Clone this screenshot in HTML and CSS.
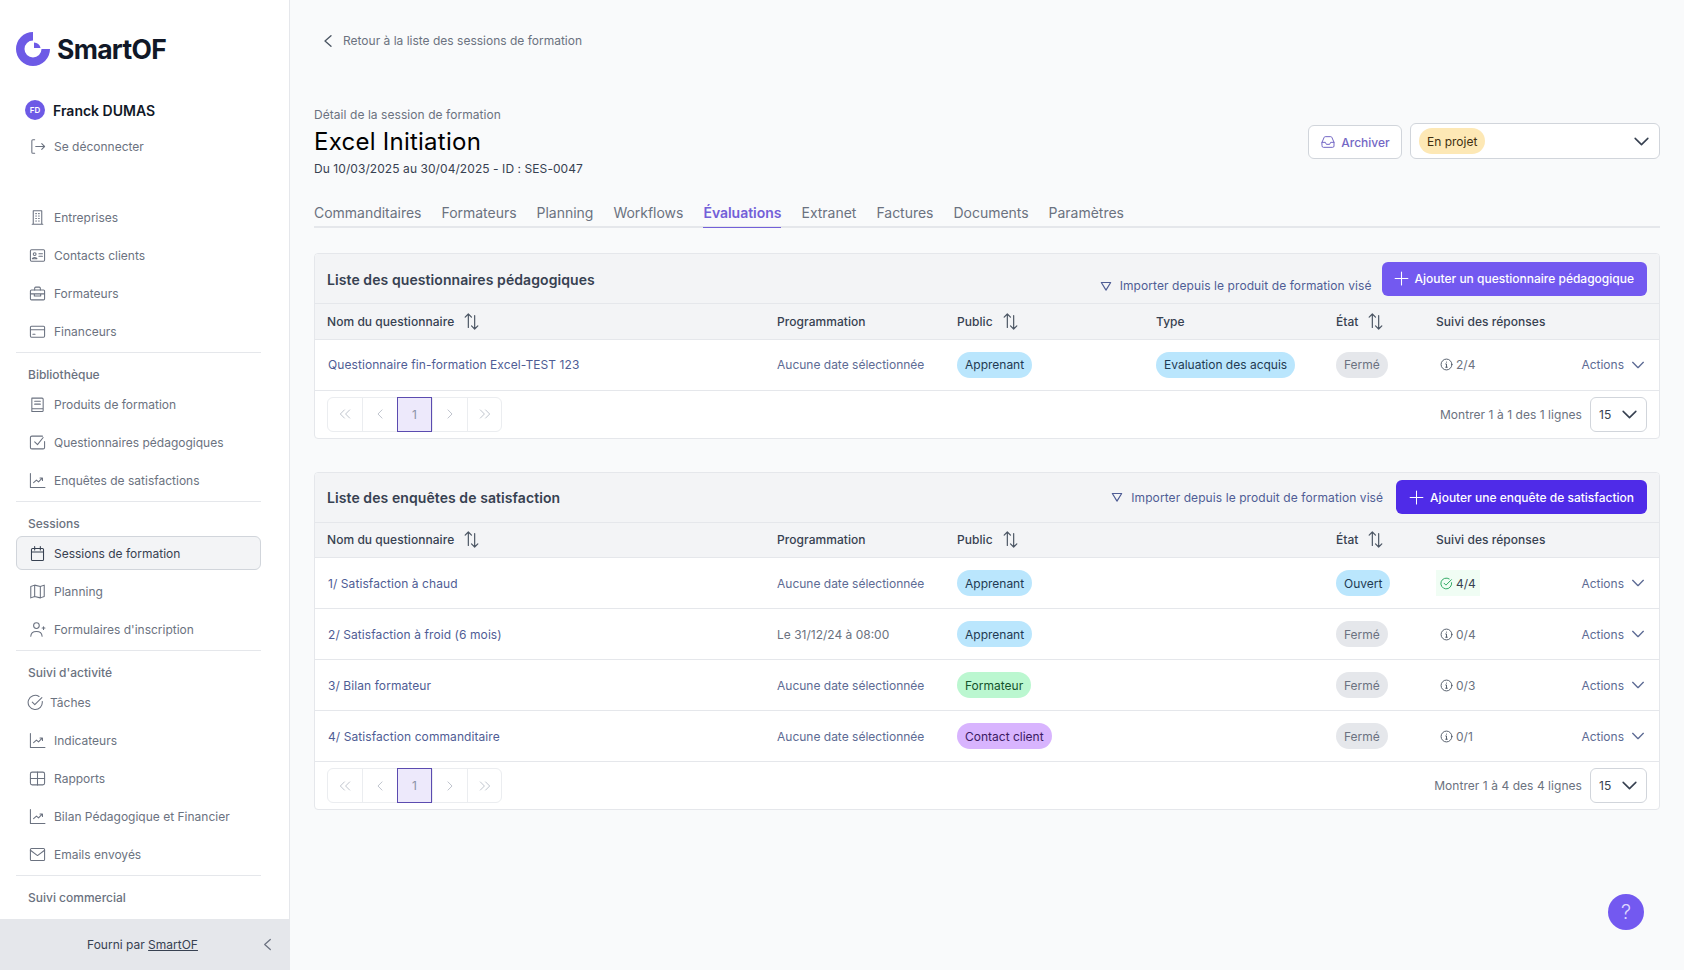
FILE: index.html
```html
<!DOCTYPE html>
<html lang="fr">
<head>
<meta charset="utf-8">
<title>Excel Initiation</title>
<link rel="stylesheet" href="styles.css">
</head>
<body>
<svg class="sprite" width="0" height="0">
  <defs>
    <symbol id="i-logout" viewBox="0 0 24 24"><path d="M8 2.500H5.500A1.500 1.500 0 0 0 4 4v16a1.500 1.500 0 0 0 1.500 1.500H8M9.500 12H22M18 8l4 4-4 4"/></symbol>
    <symbol id="i-building" viewBox="0 0 24 24"><path d="M6 21.500V2.500h12v19M4.500 21.500h15M9.500 6.500h1M13.500 6.500h1M9.500 10h1M13.500 10h1M9.500 13.500h1M13.500 13.500h1M9.500 17h1M13.500 17h1"/></symbol>
    <symbol id="i-id" viewBox="0 0 24 24"><rect x="2" y="4" width="20" height="16" rx="1.500"/><circle cx="8" cy="10" r="2"/><path d="M4.800 16.500c.6-2.400 5.800-2.400 6.400 0zM14 9.500h5M14 13h5"/></symbol>
    <symbol id="i-briefcase" viewBox="0 0 24 24"><rect x="2" y="7" width="20" height="14" rx="1.500"/><path d="M8 7V4.500A1.500 1.500 0 0 1 9.500 3h5A1.500 1.500 0 0 1 16 4.500V7M2 12.500h20M7.500 12.500v3h9v-3"/></symbol>
    <symbol id="i-card" viewBox="0 0 24 24"><rect x="2" y="4.500" width="20" height="15.500" rx="1.500"/><path d="M2 9.500h20M5.500 16h3"/></symbol>
    <symbol id="i-book" viewBox="0 0 24 24"><path d="M4 3h14.500A1.500 1.500 0 0 1 20 4.500v16a1.500 1.500 0 0 1-1.500 1.500H4zM8 7.500h8M8 11.500h8M4 18h16"/></symbol>
    <symbol id="i-check" viewBox="0 0 24 24"><path d="M22 10.500V19a2 2 0 0 1-2 2H4a2 2 0 0 1-2-2V5a2 2 0 0 1 2-2h15M8 11l4 4 8-10"/></symbol>
    <symbol id="i-chart" viewBox="0 0 24 24"><path d="M2 2v20h20.500M6.500 15l4-3.500 3 2.500 5-5.500M15.500 8.500h3.500V12"/></symbol>
    <symbol id="i-cal" viewBox="0 0 24 24"><rect x="3.500" y="5" width="17" height="17" rx="1.500"/><path d="M8 2v5M16 2v5M3.500 10h17"/></symbol>
    <symbol id="i-map" viewBox="0 0 24 24"><path d="M8 3 2.500 5v16L8 19l8 2 5.500-2V3L16 5zM8 3v16M16 5v16"/></symbol>
    <symbol id="i-user" viewBox="0 0 24 24"><circle cx="10.500" cy="6.500" r="4"/><path d="M2.500 21.500c.5-9 15.500-9 16 0M20.500 8v4M18.500 10h4"/></symbol>
    <symbol id="i-ok" viewBox="0 0 24 24"><path d="M21.500 10.500A10 10 0 1 1 17 3.500M7.500 11.500l3.500 3.500L21 5"/></symbol>
    <symbol id="i-grid" viewBox="0 0 24 24"><rect x="2" y="3" width="20" height="18" rx="2.500"/><path d="M2 12h20M12 3v18"/></symbol>
    <symbol id="i-mail" viewBox="0 0 24 24"><rect x="2" y="3.500" width="20" height="17" rx="1.500"/><path d="M2 6l10 7.500L22 6"/></symbol>
    <symbol id="i-inbox" viewBox="0 0 24 24"><path d="M3 12.500 6 5.500A2 2 0 0 1 7.800 4h8.400A2 2 0 0 1 18 5.500l3 7V18a2 2 0 0 1-2 2H5a2 2 0 0 1-2-2zM3 12.500h5l1.500 3h5l1.500-3h5"/></symbol>
    <symbol id="i-sort" viewBox="0 0 24 24"><path d="M8 19.500V2.500M4 6.500l4-4 4 4M16 4.500v17M12 17.500l4 4 4-4"/></symbol>
    <symbol id="i-tri" viewBox="0 0 24 24"><path d="M4 6h16l-8 13z"/></symbol>
    <symbol id="i-plus" viewBox="0 0 24 24"><path d="M12 3v18M3 12h18"/></symbol>
    <symbol id="i-down" viewBox="0 0 24 24"><path d="M4 8l8 8 8-8"/></symbol>
    <symbol id="i-left" viewBox="0 0 24 24"><path d="M16.500 4l-9 8 9 8"/></symbol>
    <symbol id="i-info" viewBox="0 0 24 24"><circle cx="12" cy="12" r="10"/><path d="M10.500 11H12v6M10.500 17h3M12 7.500v.3"/></symbol>
    <symbol id="i-first" viewBox="0 0 24 24"><path d="M11 5l-7 7 7 7M20 5l-7 7 7 7"/></symbol>
    <symbol id="i-prev" viewBox="0 0 24 24"><path d="M15.500 5l-7 7 7 7"/></symbol>
    <symbol id="i-next" viewBox="0 0 24 24"><path d="M8.500 5l7 7-7 7"/></symbol>
    <symbol id="i-last" viewBox="0 0 24 24"><path d="M4 5l7 7-7 7M13 5l7 7-7 7"/></symbol>
  </defs>
</svg>

<div class="app">
  <aside class="sidebar">
    <div class="side-scroll">
      <div class="logo">
        <svg class="logo-mark" viewBox="0 0 34 34"><path class="logo-fill" d="M17 0V8.500A8.500 8.500 0 1 0 25.500 17H34A17 17 0 1 1 17 0Z"/><path class="logo-fill" d="M18 10.500A6.500 6.500 0 0 1 24.500 16H18Z"/></svg>
        <span class="logo-text">SmartOF</span>
      </div>
      <div class="user"><span class="avatar">FD</span><span class="user-name">Franck DUMAS</span></div>
      <a class="nav-item logout"><svg class="ico"><use href="#i-logout"/></svg>Se déconnecter</a>

      <nav class="nav-group first">
        <a class="nav-item"><svg class="ico"><use href="#i-building"/></svg>Entreprises</a>
        <a class="nav-item"><svg class="ico"><use href="#i-id"/></svg>Contacts clients</a>
        <a class="nav-item"><svg class="ico"><use href="#i-briefcase"/></svg>Formateurs</a>
        <a class="nav-item"><svg class="ico"><use href="#i-card"/></svg>Financeurs</a>
      </nav>
      <nav class="nav-group">
        <div class="nav-title">Bibliothèque</div>
        <a class="nav-item"><svg class="ico"><use href="#i-book"/></svg>Produits de formation</a>
        <a class="nav-item"><svg class="ico"><use href="#i-check"/></svg>Questionnaires pédagogiques</a>
        <a class="nav-item"><svg class="ico"><use href="#i-chart"/></svg>Enquêtes de satisfactions</a>
      </nav>
      <nav class="nav-group">
        <div class="nav-title">Sessions</div>
        <a class="nav-item active"><svg class="ico"><use href="#i-cal"/></svg>Sessions de formation</a>
        <a class="nav-item"><svg class="ico"><use href="#i-map"/></svg>Planning</a>
        <a class="nav-item"><svg class="ico"><use href="#i-user"/></svg>Formulaires d'inscription</a>
      </nav>
      <nav class="nav-group">
        <div class="nav-title">Suivi d'activité</div>
        <a class="nav-item tight"><svg class="ico"><use href="#i-ok"/></svg>Tâches</a>
        <a class="nav-item"><svg class="ico"><use href="#i-chart"/></svg>Indicateurs</a>
        <a class="nav-item"><svg class="ico"><use href="#i-grid"/></svg>Rapports</a>
        <a class="nav-item"><svg class="ico"><use href="#i-chart"/></svg>Bilan Pédagogique et Financier</a>
        <a class="nav-item"><svg class="ico"><use href="#i-mail"/></svg>Emails envoyés</a>
      </nav>
      <nav class="nav-group">
        <div class="nav-title">Suivi commercial</div>
      </nav>
    </div>
    <footer class="side-foot">
      <span class="foot-text">Fourni par <u>SmartOF</u></span>
      <svg class="foot-chev"><use href="#i-left"/></svg>
    </footer>
  </aside>

  <main class="main">
    <a class="back"><svg class="back-ico"><use href="#i-left"/></svg>Retour à la liste des sessions de formation</a>

    <header class="head">
      <div class="head-text">
        <div class="eyebrow">Détail de la session de formation</div>
        <h1 class="title">Excel Initiation</h1>
        <div class="subtitle">Du 10/03/2025 au 30/04/2025 - ID : SES-0047</div>
      </div>
      <div class="head-actions">
        <button class="btn-archive"><svg class="ico-s"><use href="#i-inbox"/></svg>Archiver</button>
        <div class="status-select"><span class="badge amber">En projet</span><svg class="chev-dark"><use href="#i-down"/></svg></div>
      </div>
    </header>

    <div class="tabs">
      <a class="tab">Commanditaires</a>
      <a class="tab">Formateurs</a>
      <a class="tab">Planning</a>
      <a class="tab">Workflows</a>
      <a class="tab on">Évaluations</a>
      <a class="tab">Extranet</a>
      <a class="tab">Factures</a>
      <a class="tab">Documents</a>
      <a class="tab">Paramètres</a>
    </div>

    <section class="card first-card">
      <div class="card-head">
        <h2 class="card-title">Liste des questionnaires pédagogiques</h2>
        <a class="import low"><svg class="tri"><use href="#i-tri"/></svg>Importer depuis le produit de formation visé</a>
        <button class="btn-add light"><svg class="plus"><use href="#i-plus"/></svg>Ajouter un questionnaire pédagogique</button>
      </div>
      <table class="tbl">
        <colgroup><col class="c1"><col class="c2"><col class="c3"><col class="c4"><col class="c5"><col class="c6"><col class="c7"></colgroup>
        <thead><tr>
          <th>Nom du questionnaire<svg class="sort"><use href="#i-sort"/></svg></th>
          <th>Programmation</th>
          <th>Public<svg class="sort"><use href="#i-sort"/></svg></th>
          <th>Type</th>
          <th>État<svg class="sort"><use href="#i-sort"/></svg></th>
          <th>Suivi des réponses</th>
          <th></th>
        </tr></thead>
        <tbody>
          <tr>
            <td class="link">Questionnaire fin-formation Excel-TEST 123</td>
            <td class="link2">Aucune date sélectionnée</td>
            <td><span class="badge blue">Apprenant</span></td>
            <td><span class="badge blue">Evaluation des acquis</span></td>
            <td><span class="badge gray">Fermé</span></td>
            <td><span class="resp"><svg class="ico-r"><use href="#i-info"/></svg>2/4</span></td>
            <td class="act"><span class="act-in">Actions<svg class="chev"><use href="#i-down"/></svg></span></td>
          </tr>
        </tbody>
      </table>
      <div class="pager-row">
        <div class="pager">
          <span class="pg"><svg class="pg-ico"><use href="#i-first"/></svg></span>
          <span class="pg"><svg class="pg-ico"><use href="#i-prev"/></svg></span>
          <span class="pg cur">1</span>
          <span class="pg"><svg class="pg-ico"><use href="#i-next"/></svg></span>
          <span class="pg"><svg class="pg-ico"><use href="#i-last"/></svg></span>
        </div>
        <div class="count"><span>Montrer 1 à 1 des 1 lignes</span><span class="size">15<svg class="chev-dark"><use href="#i-down"/></svg></span></div>
      </div>
    </section>

    <section class="card">
      <div class="card-head">
        <h2 class="card-title">Liste des enquêtes de satisfaction</h2>
        <a class="import"><svg class="tri"><use href="#i-tri"/></svg>Importer depuis le produit de formation visé</a>
        <button class="btn-add"><svg class="plus"><use href="#i-plus"/></svg>Ajouter une enquête de satisfaction</button>
      </div>
      <table class="tbl">
        <colgroup><col class="c1"><col class="c2"><col class="c3"><col class="c4"><col class="c5"><col class="c6"><col class="c7"></colgroup>
        <thead><tr>
          <th>Nom du questionnaire<svg class="sort"><use href="#i-sort"/></svg></th>
          <th>Programmation</th>
          <th>Public<svg class="sort"><use href="#i-sort"/></svg></th>
          <th></th>
          <th>État<svg class="sort"><use href="#i-sort"/></svg></th>
          <th>Suivi des réponses</th>
          <th></th>
        </tr></thead>
        <tbody>
          <tr>
            <td class="link">1/ Satisfaction à chaud</td>
            <td class="link2">Aucune date sélectionnée</td>
            <td><span class="badge blue">Apprenant</span></td>
            <td></td>
            <td><span class="badge blue">Ouvert</span></td>
            <td><span class="resp done"><svg class="ico-r"><use href="#i-ok"/></svg>4/4</span></td>
            <td class="act"><span class="act-in">Actions<svg class="chev"><use href="#i-down"/></svg></span></td>
          </tr>
          <tr>
            <td class="link">2/ Satisfaction à froid (6 mois)</td>
            <td class="muted">Le 31/12/24 à 08:00</td>
            <td><span class="badge blue">Apprenant</span></td>
            <td></td>
            <td><span class="badge gray">Fermé</span></td>
            <td><span class="resp"><svg class="ico-r"><use href="#i-info"/></svg>0/4</span></td>
            <td class="act"><span class="act-in">Actions<svg class="chev"><use href="#i-down"/></svg></span></td>
          </tr>
          <tr>
            <td class="link">3/ Bilan formateur</td>
            <td class="link2">Aucune date sélectionnée</td>
            <td><span class="badge green">Formateur</span></td>
            <td></td>
            <td><span class="badge gray">Fermé</span></td>
            <td><span class="resp"><svg class="ico-r"><use href="#i-info"/></svg>0/3</span></td>
            <td class="act"><span class="act-in">Actions<svg class="chev"><use href="#i-down"/></svg></span></td>
          </tr>
          <tr>
            <td class="link">4/ Satisfaction commanditaire</td>
            <td class="link2">Aucune date sélectionnée</td>
            <td><span class="badge purple">Contact client</span></td>
            <td></td>
            <td><span class="badge gray">Fermé</span></td>
            <td><span class="resp"><svg class="ico-r"><use href="#i-info"/></svg>0/1</span></td>
            <td class="act"><span class="act-in">Actions<svg class="chev"><use href="#i-down"/></svg></span></td>
          </tr>
        </tbody>
      </table>
      <div class="pager-row">
        <div class="pager">
          <span class="pg"><svg class="pg-ico"><use href="#i-first"/></svg></span>
          <span class="pg"><svg class="pg-ico"><use href="#i-prev"/></svg></span>
          <span class="pg cur">1</span>
          <span class="pg"><svg class="pg-ico"><use href="#i-next"/></svg></span>
          <span class="pg"><svg class="pg-ico"><use href="#i-last"/></svg></span>
        </div>
        <div class="count"><span>Montrer 1 à 4 des 4 lignes</span><span class="size">15<svg class="chev-dark"><use href="#i-down"/></svg></span></div>
      </div>
    </section>

    <button class="help">?</button>
  </main>
</div>
</body>
</html>
```

FILE: styles.css
```css
* { box-sizing: border-box; }
html, body { margin: 0; height: 100%; overflow: hidden; }
body { font-family: Inter, "Noto Sans", sans-serif; font-size: 12px; color: #111827; background: #f9fafb; }
.sprite { display: block; height: 0; }
svg { fill: none; stroke: currentColor; stroke-linecap: round; stroke-linejoin: round; }
a { display: block; }

.app { display: flex; height: 970px; }

/* Sidebar */
.sidebar { width: 290px; flex: none; display: flex; flex-direction: column; background: #fff; border-right: 1px solid #e5e7eb; }
.side-scroll { flex: 1; min-height: 0; overflow: hidden; padding: 32px 28px 0 16px; }
.logo { display: flex; align-items: center; height: 34px; gap: 7px; }
.logo-mark { width: 34px; height: 34px; stroke: none; }
.logo-fill { fill: #6d5ae6; }
.logo-text { font-size: 26.500px; font-weight: 700; color: #111827; letter-spacing: -0.7px; line-height: 34px; }
.user { display: flex; align-items: center; gap: 8px; margin-top: 34px; padding-left: 9px; height: 20px; }
.avatar { width: 20px; height: 20px; border-radius: 50%; background: #6d5ae6; color: #fff; font-size: 8px; font-weight: 600; display: flex; align-items: center; justify-content: center; }
.user-name { font-size: 14px; font-weight: 600; color: #111827; }
.nav-item { display: flex; align-items: center; height: 38px; padding-left: 12px; gap: 8px; color: #6b7280; border: 1px solid transparent; border-radius: 6px; }
.ico { width: 17px; height: 17px; stroke-width: 1.500; flex: none; color: #6b7280; }
.logout { margin-top: 7px; }
.nav-group { border-bottom: 1px solid #e5e7eb; padding-bottom: 2px; }
.nav-group.first { margin-top: 33px; }
.nav-group:last-child { border-bottom: 0; }
.nav-title { font-weight: 500; color: #6b7280; padding: 14px 0 0 12px; line-height: 16px; height: 32px; }
.nav-item.active { height: 34px; margin: 2px 0; background: #f3f4f6; border-color: #d1d5db; color: #374151; }
.nav-item.active .ico { color: #374151; }
.nav-item.tight { padding-left: 10px; gap: 6px; }
.side-foot { height: 51px; flex: none; background: #e5e7eb; display: flex; align-items: center; position: relative; justify-content: center; color: #374151; padding-right: 4px; }
.foot-chev { width: 15px; height: 15px; stroke-width: 2; color: #6b7280; position: absolute; right: 14px; top: 18px; }

/* Main */
.main { flex: 1; min-width: 0; padding: 32px 24px 0 24px; position: relative; background: #f9fafb; }
.back { display: flex; align-items: center; color: #6b7280; height: 17px; gap: 7px; padding-left: 6px; }
.back-ico { width: 16px; height: 16px; stroke-width: 2; color: #4b5563; }
.head { display: flex; justify-content: space-between; align-items: center; margin-top: 57px; }
.eyebrow { color: #6b7280; line-height: 18px; letter-spacing: .06px; }
.title { font-size: 24px; font-weight: 400; color: #000; margin: 2px 0 0; line-height: 32px; letter-spacing: .25px; }
.subtitle { color: #374151; line-height: 20px; margin-top: 1px; letter-spacing: .07px; }
.head-actions { display: flex; gap: 8px; align-items: flex-end; margin-top: -3px; }
.btn-archive { height: 34px; width: 94px; display: flex; align-items: center; justify-content: center; gap: 5px; background: #fff; border: 1px solid #d1d5db; border-radius: 6px; color: #7367c5; font: 500 12px Inter, sans-serif; padding: 0; }
.ico-s { width: 16px; height: 16px; stroke-width: 1.500; }
.status-select { width: 250px; height: 36px; display: flex; justify-content: space-between; align-items: center; background: #fff; border: 1px solid #d1d5db; border-radius: 6px; padding: 0 8px 0 8px; }
.chev-dark { width: 19px; height: 19px; stroke-width: 2; color: #374151; flex: none; }

.badge { display: inline-flex; align-items: center; height: 26px; padding: 0 8px; border-radius: 13px; font-size: 12px; color: #374151; }
.amber { background: #fde8b5; color: #3f2f10; }
.blue { background: #bae6fd; color: #1f3a52; }
.gray { background: #e5e7eb; color: #6b7280; }
.green { background: #bbf7d0; color: #14532d; }
.purple { background: #d8b4fe; color: #3b1a63; }

.tabs { display: flex; gap: 20px; margin-top: 21px; border-bottom: 2px solid #e5e7eb; height: 28px; }
.tab { font-size: 14px; color: #6b7280; line-height: 26px; height: 28px; letter-spacing: -.02px; }
.tab.on { color: #7360d8; font-weight: 600; border-bottom: 1px solid #7360d8; }

/* Cards */
.card { background: #fff; border: 1px solid #e5e7eb; border-radius: 4px; margin-top: 33px; overflow: hidden; }
.card.first-card { margin-top: 25px; }
.card-head { display: flex; align-items: center; height: 50px; padding: 0 12px; background: #f3f4f6; border-bottom: 1px solid #e5e7eb; }
.card-title { font-size: 14px; font-weight: 600; color: #374151; margin: 1px auto 0 0; letter-spacing: .08px; }
.import { display: flex; align-items: center; color: #4f5d95; gap: 7px; margin-right: 13px; letter-spacing: .08px; }
.import.low { margin-top: 14px; margin-right: 10px; }
.tri { width: 14px; height: 14px; stroke-width: 2; color: #4f5d95; }
.btn-add { height: 34px; display: flex; align-items: center; gap: 5px; border: 0; border-radius: 6px; padding: 0 13px 0 12px; background: #4f2be8; color: #fff; font: 500 12px Inter, sans-serif; }
.btn-add.light { background: #7359f0; padding-left: 11px; }
.plus { width: 17px; height: 17px; stroke-width: 1.500; }

.tbl { width: 100%; border-collapse: collapse; table-layout: fixed; }
.c1 { width: 450px; }
.c2 { width: 180px; }
.c3 { width: 199px; }
.c4 { width: 180px; }
.c5 { width: 100px; }
.c6 { width: 130px; }
.tbl th { height: 35px; text-align: left; font-size: 12px; font-weight: 500; color: #374151; background: #f3f4f6; padding: 0 0 0 12px; border-bottom: 1px solid #e5e7eb; white-space: nowrap; letter-spacing: .05px; }
.sort { width: 19px; height: 19px; stroke-width: 1.500; color: #4b5563; margin-left: 8px; vertical-align: -5px; }
.tbl td { height: 51px; padding: 0 0 0 12px; border-bottom: 1px solid #e5e7eb; color: #6b7280; white-space: nowrap; }
.tbl td.link { color: #4f5d95; letter-spacing: .08px; }
.tbl td.link2 { color: #5d6b94; }
.tbl td:first-child { padding-left: 13px; }
.resp { display: inline-flex; align-items: center; gap: 3px; height: 26px; padding: 0 4px; color: #6b7280; }
.resp.done { background: #f0fdf4; color: #374151; }
.resp.done .ico-r { color: #22a35a; }
.ico-r { width: 13px; height: 13px; stroke-width: 1.700; color: #4b5563; }
.tbl td.act { text-align: right; padding-right: 13px; }
.act-in { display: inline-flex; align-items: center; gap: 6px; color: #5d6b94; }
.chev { width: 16px; height: 16px; stroke-width: 2; color: #5d6b94; }

.pager-row { height: 47px; display: flex; align-items: center; justify-content: space-between; padding: 0 12px; }
.pager { display: flex; border: 1px solid #ebedf0; border-radius: 6px; height: 35px; }
.pg { width: 35px; display: flex; align-items: center; justify-content: center; color: #9ca3af; border-left: 1px solid #ebedf0; }
.pg:first-child { border-left: 0; width: 34px; }
.pg:last-child { width: 34px; }
.pg.cur { background: #ede9fb; border: 1px solid #5b4bb0; margin: -1px 0; color: #8b93a7; }
.pg-ico { width: 14px; height: 14px; stroke-width: 1.500; color: #b6bcc6; }
.count { display: flex; align-items: center; gap: 8px; color: #6b7280; letter-spacing: .05px; }
.size { width: 57px; height: 35px; display: flex; align-items: center; justify-content: space-between; background: #fff; border: 1px solid #d1d5db; border-radius: 6px; padding: 0 7px 0 8px; color: #374151; }

.help { position: absolute; right: 40px; top: 894px; width: 36px; height: 36px; border: 0; border-radius: 50%; background: #7359f0; color: #ddd6fe; font: 300 20px Inter, sans-serif; padding: 0; }
```
